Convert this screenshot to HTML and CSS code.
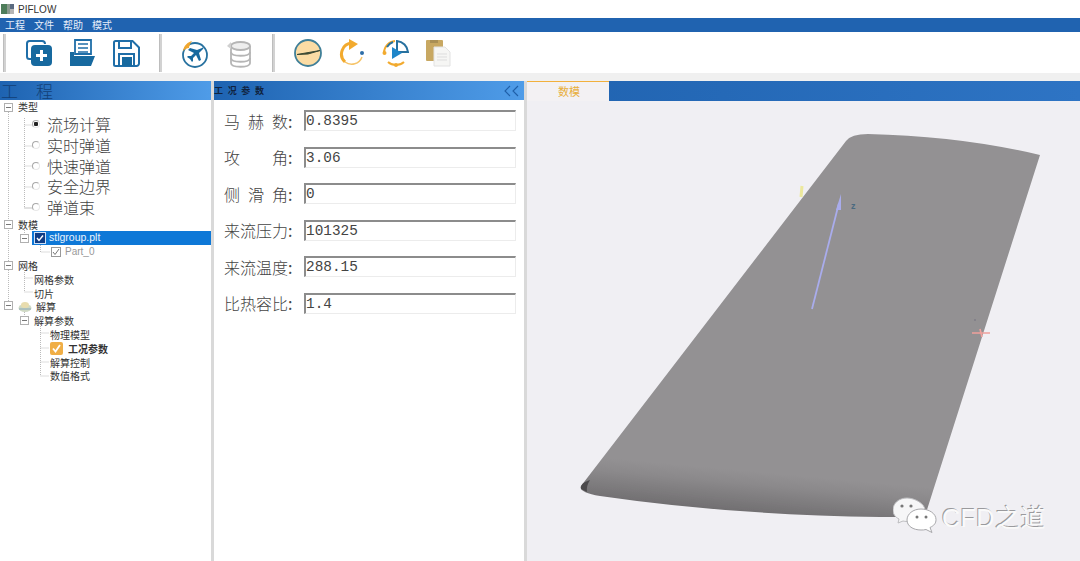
FILE: index.html
```html
<!DOCTYPE html>
<html lang="zh">
<head>
<meta charset="utf-8">
<title>PIFLOW</title>
<link rel="stylesheet" href="styles.css">
</head>
<body>
<div class="app">
  <div class="titlebar">
    <svg class="app-icon" width="13" height="10" viewBox="0 0 13 10"><rect width="6" height="10" fill="#4e7d5a"/><rect x="6" width="3" height="10" fill="#8a9a8e"/><rect x="9" width="4" height="5" fill="#5a6a80"/><rect x="9" y="5" width="4" height="5" fill="#b5b5b5"/></svg>
    <span>PIFLOW</span>
  </div>
  <nav class="menubar"><span>工程</span><span>文件</span><span>帮助</span><span>模式</span></nav>
  <div class="toolbar">
    <i class="sep"></i>
    <svg class="tool t-new" width="28" height="28" viewBox="0 0 28 28"><path d="M6 20H4.500A2.500 2.500 0 0 1 2 17.500V4.500A2.500 2.500 0 0 1 4.500 2H17A3 3 0 0 1 20 5" fill="none" stroke="#1f6ea8" stroke-width="2"/><rect x="6" y="6" width="21" height="21" rx="4" fill="#17699f"/><path d="M16.500 11v11M11 16.500h11" stroke="#fff" stroke-width="3"/></svg>
    <svg class="tool t-file" width="27" height="28" viewBox="0 0 27 28"><path d="M6 1h16v14H6z" fill="#fff" stroke="#1f6ea8" stroke-width="1.800"/><path d="M9 5h10M9 9h10M9 13h10" stroke="#1f6ea8" stroke-width="1.500"/><path d="M1 13h4v4h21l-4 10H1z" fill="#17699f"/></svg>
    <svg class="tool t-save" width="27" height="27" viewBox="0 0 27 27"><path d="M2.500 1h17L26 7.500v16A2.500 2.500 0 0 1 23.500 26h-21A1.500 1.500 0 0 1 1 24.500v-22A1.500 1.500 0 0 1 2.500 1z" fill="#fff" stroke="#1f6ea8" stroke-width="2"/><path d="M6 1v7h12V1" fill="none" stroke="#1f6ea8" stroke-width="2"/><rect x="6" y="14" width="15" height="12" fill="#fff" stroke="#1f6ea8" stroke-width="2"/><rect x="9" y="17" width="10" height="9" fill="#17699f"/></svg>
    <i class="sep s2"></i>
    <svg class="tool t-plane" width="28" height="28" viewBox="0 0 28 28"><circle cx="14" cy="15" r="12" fill="#fff" stroke="#27719f" stroke-width="1.800"/><path d="M2 11C3 5 7 2 11 1 9 4 8 6 8 8 6 8 4 9 2 11z" fill="#f0a72f"/><path d="M21 8c1-1 2 0 1 1l-4 4 2 7-2 1-3-6-3 3v3l-1 1-2-3-3-2 1-1h3l3-3-6-3 2-2 7 2z" fill="#17699f"/></svg>
    <svg class="tool t-db" width="28" height="28" viewBox="0 0 28 28"><path d="M5 6v17c0 5 19 5 19 0V6" fill="#fff" stroke="#b5b5b5" stroke-width="1.800"/><ellipse cx="14.500" cy="6" rx="9.500" ry="4" fill="#eee" stroke="#b5b5b5" stroke-width="1.800"/><path d="M5 12c0 5 19 5 19 0M5 18c0 5 19 5 19 0" fill="none" stroke="#b5b5b5" stroke-width="1.800"/><path d="M5 2L1 6l4 3z" fill="#d0d0d0"/></svg>
    <i class="sep s3"></i>
    <svg class="tool t-wing" width="28" height="28" viewBox="0 0 28 28"><circle cx="14" cy="14" r="13" fill="#fbdca4" stroke="#3f7f98" stroke-width="1.800"/><path d="M3 15.500L26 11.500 14 15z" fill="#3c4a34" stroke="#3c4a34"/></svg>
    <svg class="tool t-arrow" width="28" height="28" viewBox="0 0 28 28"><path d="M14 4A11 11 0 0 0 7 23" fill="none" stroke="#f2aa2e" stroke-width="3"/><path d="M7 23A11 11 0 0 0 24 18" fill="none" stroke="#f6c469" stroke-width="1.500"/><path d="M11 0l9 5-9 6z" fill="#f2aa2e"/><circle cx="24" cy="14" r="2" fill="#2f6ea8"/></svg>
    <svg class="tool t-play" width="28" height="28" viewBox="0 0 28 28"><path d="M13 2A12 12 0 0 0 2 14M6 23a12 12 0 0 0 16 0" fill="none" stroke="#f2aa2e" stroke-width="2"/><path d="M15 2A12 12 0 0 1 26 13H15zM5 8a12 12 0 0 1 6-5" fill="none" stroke="#27719f" stroke-width="2"/><path d="M10 8l10 6-10 6z" fill="#1f86c9"/><circle cx="2.500" cy="14" r="2" fill="#f2aa2e"/><circle cx="14" cy="26" r="2" fill="#f2aa2e"/></svg>
    <svg class="tool t-clip" width="27" height="28" viewBox="0 0 27 28"><rect x="1" y="1" width="17" height="21" rx="1" fill="#c8a862"/><rect x="5" y="1" width="8" height="3" fill="#a98f55"/><path d="M9 8h11l5 5v14H9z" fill="#f6f6f4" stroke="#e2e2e2"/><path d="M12 15h10M12 18h10M12 21h10" stroke="#ddd"/></svg>
  </div>
  <div class="gap"></div>
  <main class="main">
    <section class="panel-left">
      <header class="head head-tree"><span>工</span><span>程</span></header>
      <div class="tree">
        <svg class="tree-lines" width="70" height="283" viewBox="0 100 70 283">
          <path d="M8.500 104V305M24.500 118V208H32M24.500 125H32M24.500 146H32M24.500 166H32M24.500 187H32M24.500 208H32M24.500 230V238M40.500 243V252H50M24.500 270V292H33M24.500 278H33M24.500 312V320M40.500 324V376H49M40.500 333H49M40.500 348H49M40.500 362H49" fill="none" stroke="#bbb" stroke-dasharray="1 1"/>
          <g fill="#fff" stroke="#b0b0b0"><rect x="4.500" y="103.500" width="8" height="8"/><rect x="4.500" y="220.500" width="8" height="8"/><rect x="20.500" y="234.500" width="8" height="8"/><rect x="4.500" y="261.500" width="8" height="8"/><rect x="4.500" y="301.500" width="8" height="8"/><rect x="20.500" y="316.500" width="8" height="8"/></g>
          <path d="M6 107.500h5M6 224.500h5M22 238.500h5M6 265.500h5M6 305.500h5M22 320.500h5" stroke="#777"/>
        </svg>
        <div class="row i1">类型</div>
        <div class="row-lg first"><i class="radio on"></i>流场计算</div>
        <div class="row-lg"><i class="radio"></i>实时弹道</div>
        <div class="row-lg"><i class="radio"></i>快速弹道</div>
        <div class="row-lg"><i class="radio"></i>安全边界</div>
        <div class="row-lg"><i class="radio"></i>弹道束</div>
        <div class="row i1">数模</div>
        <div class="row selected"><svg width="12" height="12" viewBox="0 0 12 12"><rect x=".5" y=".5" width="11" height="11" fill="#0f3d86" stroke="#cfe0f5"/><path d="M3 6l2 2.500L9 3.500" fill="none" stroke="#fff" stroke-width="1.400"/></svg><span>stlgroup.plt</span></div>
        <div class="row part"><svg width="10" height="10" viewBox="0 0 10 10"><rect x=".5" y=".5" width="9" height="9" fill="#fff" stroke="#999"/><path d="M2 5l2 2.500L8 2" fill="none" stroke="#777"/></svg><span>Part_0</span></div>
        <div class="row i1">网格</div>
        <div class="row i2">网格参数</div>
        <div class="row i2">切片</div>
        <div class="row i1 solve"><svg width="14" height="12" viewBox="0 0 14 12"><ellipse cx="7" cy="7" rx="6.500" ry="4" fill="#cfd9c4"/><ellipse cx="7" cy="4" rx="4" ry="3" fill="#e8dcae"/><path d="M1 8h12" stroke="#8aa8b8"/></svg><span>解算</span></div>
        <div class="row i2">解算参数</div>
        <div class="row i3">物理模型</div>
        <div class="row i3 current"><svg width="13" height="13" viewBox="0 0 13 13"><rect width="13" height="13" rx="2" fill="#f0ae45"/><path d="M3 6.500l2.500 3L10 3" fill="none" stroke="#fff" stroke-width="1.800"/></svg><span>工况参数</span></div>
        <div class="row i3">解算控制</div>
        <div class="row i3">数值格式</div>
      </div>
    </section>
    <div class="splitter"></div>
    <section class="panel-mid">
      <header class="head head-form">
        <span class="head-title">工 况 参 数</span>
        <svg width="18" height="12" viewBox="0 0 18 12"><path d="M7 1L2 6l5 5M15 1l-5 5 5 5" fill="none" stroke="#1f5fa8" stroke-width="1.100"/></svg>
      </header>
      <div class="form">
        <div class="field"><div class="label"><span>马</span><span>赫</span><span>数</span></div><b>:</b><div class="input">0.8395</div></div>
        <div class="field"><div class="label"><span>攻</span><span>角</span></div><b>:</b><div class="input">3.06</div></div>
        <div class="field"><div class="label"><span>侧</span><span>滑</span><span>角</span></div><b>:</b><div class="input">0</div></div>
        <div class="field"><div class="label"><span>来</span><span>流</span><span>压</span><span>力</span></div><b>:</b><div class="input">101325</div></div>
        <div class="field"><div class="label"><span>来</span><span>流</span><span>温</span><span>度</span></div><b>:</b><div class="input">288.15</div></div>
        <div class="field"><div class="label"><span>比</span><span>热</span><span>容</span><span>比</span></div><b>:</b><div class="input">1.4</div></div>
      </div>
    </section>
    <div class="splitter"></div>
    <section class="panel-view">
      <div class="tabs"><div class="tab">数模</div></div>
      <div class="viewport">
        <svg class="scene" width="553" height="460" viewBox="527 101 553 460">
          <defs>
            <linearGradient id="wing" gradientUnits="userSpaceOnUse" x1="760" y1="472" x2="756" y2="515">
              <stop offset="0" stop-color="#939193"/>
              <stop offset=".3" stop-color="#8b898b"/>
              <stop offset="1" stop-color="#6f6d6f"/>
            </linearGradient>
            <filter id="soft" x="-5%" y="-5%" width="110%" height="110%"><feGaussianBlur stdDeviation=".5"/></filter>
          </defs>
          <path d="M581 486L846 141Q851 134 868 134Q960 136 1040 155L925 516Q905 517 880 517Q730 515 600 496Q578 492 581 486Z" fill="url(#wing)" filter="url(#soft)"/>
          <path d="M581 489Q580 485 585 482L590 480Q586 486 587 492Z" fill="#4c4a4c"/>
          <path d="M802 186l-1 11" stroke="#ece89c" stroke-width="3"/>
          <path d="M812 309L839 203" stroke="#a9acec" stroke-width="1.800"/>
          <path d="M841 194L836 210h5z" fill="#a9acec"/>
          <text class="axis" x="851" y="209">z</text>
          <path d="M972 333h18M980 329l2 8" stroke="#f0a09c" stroke-width="1.600"/>
          <circle cx="975" cy="320" r=".7" fill="#667"/>
        </svg>
        <div class="mark">
          <svg width="44" height="36" viewBox="0 0 44 36"><path d="M14 1C6 1 0 6 0 13c0 4 2 7 6 9l-1 4 5-2c2 .6 6 .6 8 0 8 0 14-5 14-11S22 1 14 1z" fill="#f6f6f7" stroke="#bdbdc0"/><path d="M28 12c-8 0-14 5-14 11s6 10 14 10c2 0 3 0 5-.5l6 3-2-5c4-2 6-4 6-8 0-6-7-10.500-15-10.500z" fill="#fff" stroke="#a8a8ab"/><circle cx="9" cy="9" r="1.600" fill="#777"/><circle cx="18" cy="9" r="1.600" fill="#777"/><circle cx="24" cy="20" r="1.500" fill="#777"/><circle cx="33" cy="20" r="1.500" fill="#777"/></svg>
          <span>CFD之道</span>
        </div>
      </div>
    </section>
  </main>
</div>
</body>
</html>
```

FILE: styles.css
```css
* { box-sizing: border-box; }
html, body { margin: 0; padding: 0; }
body {
  width: 1080px;
  height: 561px;
  overflow: hidden;
  background: #fff;
  font-family: "Noto Sans CJK SC", "Liberation Sans", sans-serif;
}
.app { display: flex; flex-direction: column; height: 561px; }

.titlebar {
  height: 18px;
  display: flex;
  align-items: center;
  gap: 4px;
  padding-left: 1px;
  font: 10px "Liberation Sans", sans-serif;
  color: #333;
}
.menubar {
  height: 14px;
  background: #2063b0;
  color: #e6eefa;
  font-size: 10px;
  line-height: 14px;
  display: flex;
  gap: 9px;
  padding-left: 5px;
}
.toolbar {
  height: 41px;
  display: flex;
  align-items: center;
  background: #fff;
  padding-left: 3px;
}
.sep {
  width: 3px;
  height: 38px;
  background: #d2d2d2;
  border-left: 1px solid #bdbdbd;
}
.tool { flex: none; }
.t-new { margin-left: 19px; margin-top: 1px; }
.t-file { margin-left: 16px; margin-top: 1px; }
.t-save { margin-left: 17px; margin-top: 1px; }
.s2 { margin-left: 19px; }
.t-plane { margin-left: 19px; margin-top: 2px; }
.t-db { margin-left: 17px; margin-top: 3px; }
.s3 { margin-left: 18px; }
.t-wing { margin-left: 19px; }
.t-arrow { margin-left: 16px; }
.t-play { margin-left: 16px; }
.t-clip { margin-left: 15px; margin-top: 1px; }
.gap { height: 8px; background: #f0f0f0; }

.main { flex: 1; display: flex; min-height: 0; }
.splitter { width: 3px; background: #d9d9d9; }
.panel-left { width: 211px; background: #fff; }
.panel-mid { width: 310px; background: #fff; }
.panel-view { flex: 1; min-width: 0; display: flex; flex-direction: column; background: #f0eff3; }

.head {
  height: 19px;
  display: flex;
  align-items: center;
  background: linear-gradient(90deg, #1e63b1, #4f9ce8);
  color: #123f76;
}
.head-tree { font-size: 17px; gap: 18px; padding-left: 1px; font-family: "Liberation Serif", "Noto Sans CJK SC", serif; font-weight: 300; }
.head-form { justify-content: space-between; padding: 0 3px 0 0; }
.head-title { font-size: 9px; font-weight: 700; color: #10233f; white-space: pre; letter-spacing: 1.300px; }

.tree { position: relative; font-size: 10px; color: #333; }
.tree-lines { position: absolute; left: 0; top: 0; }
.row {
  position: relative;
  height: 13.800px;
  line-height: 13px;
  display: flex;
  align-items: center;
  white-space: nowrap;
}
.i1 { padding-left: 18px; }
.i2 { padding-left: 34px; }
.i3 { padding-left: 50px; }
.row-lg {
  position: relative;
  height: 20.700px;
  line-height: 20px;
  display: flex;
  align-items: center;
  padding-left: 32px;
  font-size: 16px;
  color: #444;
  font-weight: 300;
}
.radio {
  width: 8px;
  height: 8px;
  margin-right: 7px;
  border-radius: 50%;
  border: 1px solid #a8a8a8;
  border-right-color: #e8e8e8;
  border-bottom-color: #e8e8e8;
  background: #fff;
}
.radio.on { background: radial-gradient(circle, #222 0 2px, #fff 2.500px); }
.selected {
  margin-left: 32px;
  background: #0e78d7;
  color: #eaf3fc;
  padding-left: 2px;
  gap: 3px;
  font-family: "Liberation Sans", sans-serif;
  font-size: 10.500px;
}
.part {
  padding-left: 51px;
  gap: 4px;
  color: #999;
  font-family: "Liberation Sans", sans-serif;
  font-size: 10px;
}
.solve { padding-left: 18px; gap: 4px; }
.current { gap: 5px; font-weight: 700; padding-left: 50px; }

.form { padding: 10px 0 0 10px; }
.field {
  height: 21px;
  line-height: 20px;
  margin-bottom: 15.500px;
  display: flex;
  align-items: center;
  font-size: 16px;
  color: #444;
  font-weight: 300;
}
.label { width: 64px; display: flex; justify-content: space-between; }
.field b { width: 16px; font-weight: 400; }
.input {
  width: 212px;
  height: 21px;
  border-top: 2px solid #8c8c8c;
  border-left: 2px solid #8c8c8c;
  border-right: 1px solid #ececec;
  border-bottom: 1px solid #ececec;
  font: 14.400px/18px "Liberation Mono", monospace;
  color: #444;
}

.tabs {
  height: 20px;
  background: linear-gradient(90deg, #2063b0, #2e74c4);
}
.tab {
  width: 82px;
  height: 20px;
  padding-left: 2px;
  background: #f3f1f3;
  border-top: 1px solid #f2b03c;
  text-align: center;
  font-size: 11px;
  line-height: 19px;
  color: #e8ae3a;
}
.viewport { position: relative; flex: 1; overflow: hidden; }
.scene { display: block; }
.axis { font: 700 9px "Liberation Sans", sans-serif; fill: #4a6a80; }
.mark {
  position: absolute;
  left: 366px;
  top: 393px;
  display: flex;
  align-items: center;
  gap: 5px;
}
.mark span {
  padding-top: 6px;
  font-size: 25px;
  line-height: 36px;
  color: #fafafa;
  letter-spacing: .500px;
  text-shadow: -1px -1px 0 #9a9a9d;
  font-family: "Liberation Sans", "Noto Sans CJK SC", sans-serif;
}
```
